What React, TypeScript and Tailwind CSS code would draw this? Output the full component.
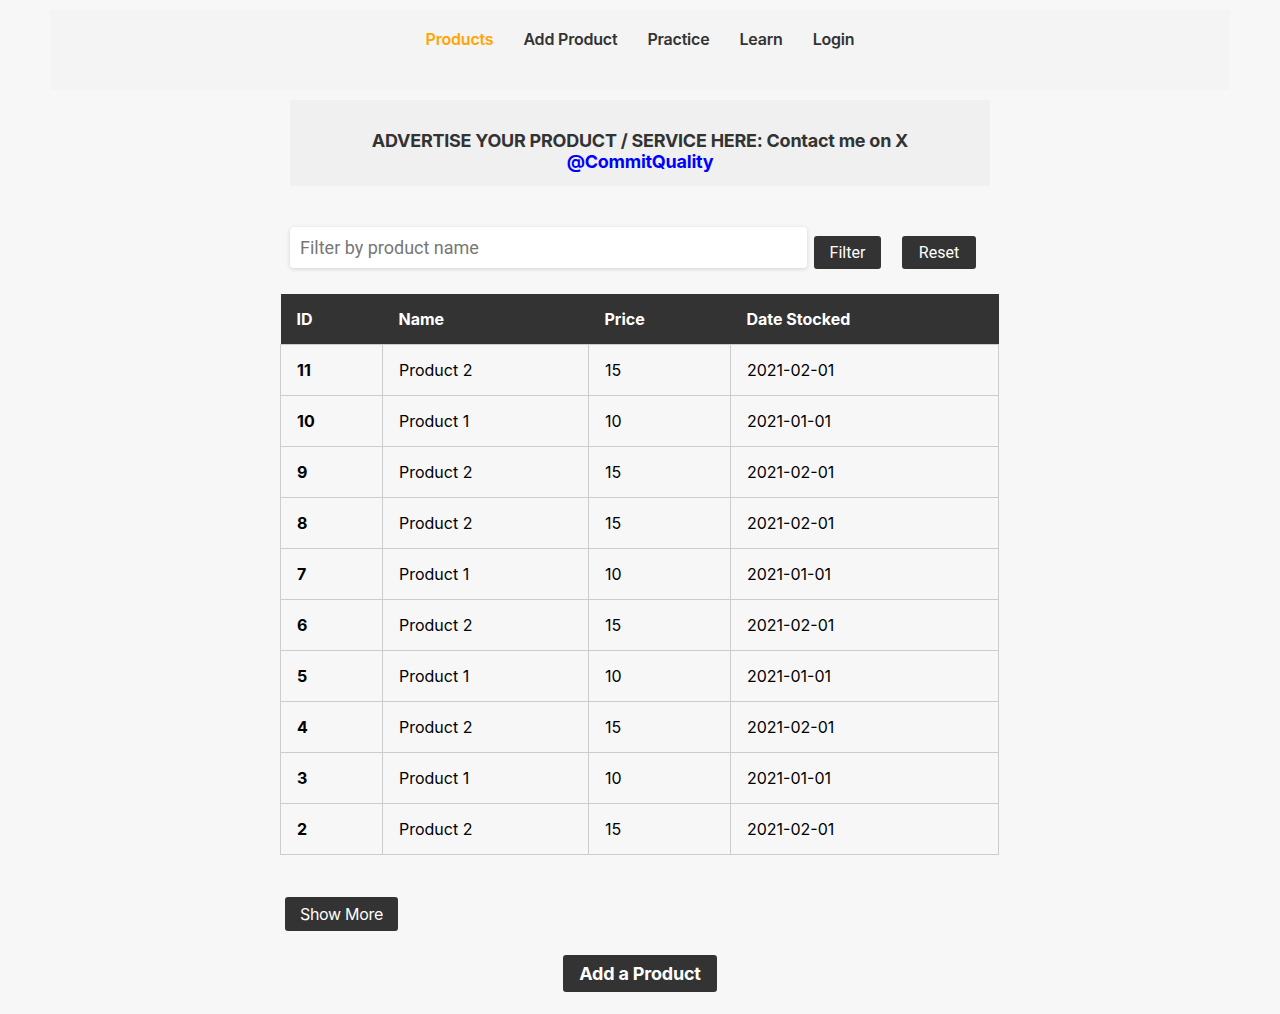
import React from 'react'

const rows = [
  { id: 11, name: 'Product 2', price: 15, date: '2021-02-01' },
  { id: 10, name: 'Product 1', price: 10, date: '2021-01-01' },
  { id: 9, name: 'Product 2', price: 15, date: '2021-02-01' },
  { id: 8, name: 'Product 2', price: 15, date: '2021-02-01' },
  { id: 7, name: 'Product 1', price: 10, date: '2021-01-01' },
  { id: 6, name: 'Product 2', price: 15, date: '2021-02-01' },
  { id: 5, name: 'Product 1', price: 10, date: '2021-01-01' },
  { id: 4, name: 'Product 2', price: 15, date: '2021-02-01' },
  { id: 3, name: 'Product 1', price: 10, date: '2021-01-01' },
  { id: 2, name: 'Product 2', price: 15, date: '2021-02-01' },
]

const links = ['Products', 'Add Product', 'Practice', 'Learn', 'Login']

export default function App() {
  return (
    <div className="min-h-[1014px] bg-[#f7f7f7] pt-[10px] font-['Inter',sans-serif] text-[#333]">
      {/* Nav */}
      <nav className="mx-[50px] h-[80px] bg-[#f4f4f4] flex justify-center pt-[18px]">
        <ul className="flex gap-[30px] text-[16px] font-semibold leading-[22px] tracking-[-0.2px]">
          {links.map((l, i) => (
            <li key={l} className={i === 0 ? 'text-[#ffa500]' : 'text-[#333]'}>{l}</li>
          ))}
        </ul>
      </nav>

      <div className="w-[720px] mx-auto">
        {/* Ad banner */}
        <div className="mt-[10px] ml-[10px] w-[700px] h-[86px] bg-[#f0f0f0] flex flex-col items-center justify-center pt-[16px] text-[18px] font-bold leading-[21px] tracking-[-0.25px]">
          <p>ADVERTISE YOUR PRODUCT / SERVICE HERE: Contact me on X</p>
          <a className="text-[#0000ff]">@CommitQuality</a>
        </div>

        {/* Filter */}
        <div className="mt-[41px] ml-[10px] flex items-start">
          <input
            placeholder="Filter by product name"
            className="w-[517px] h-[41px] bg-white rounded-[4px] shadow-[0_1px_4px_rgba(0,0,0,0.15)] px-[10px] text-[18px] font-['Roboto',sans-serif] placeholder:text-[#777] outline-none"
          />
          <button className="ml-[7px] mt-[9px] h-[33px] w-[67px] bg-[#333] text-white rounded-[3px] text-[16px] font-['Roboto',sans-serif]">Filter</button>
          <button className="ml-[21px] mt-[9px] h-[33px] w-[74px] bg-[#333] text-white rounded-[3px] text-[16px] font-['Roboto',sans-serif]">Reset</button>
        </div>

        {/* Table */}
        <table className="mt-[25px] w-[719px] border-collapse text-[16px]">
          <thead>
            <tr className="bg-[#333] text-white h-[50px]">
              <th className="w-[102px] text-left font-bold pl-[16px]">ID</th>
              <th className="w-[206px] text-left font-bold pl-[16px]">Name</th>
              <th className="w-[142px] text-left font-bold pl-[16px]">Price</th>
              <th className="text-left font-bold pl-[16px]">Date Stocked</th>
            </tr>
          </thead>
          <tbody>
            {rows.map((r) => (
              <tr key={r.id} className="h-[51px]">
                <td className="border border-[#ccc] pl-[16px] font-bold text-black">{r.id}</td>
                <td className="border border-[#ccc] pl-[16px] text-black">{r.name}</td>
                <td className="border border-[#ccc] pl-[16px] text-black">{r.price}</td>
                <td className="border border-[#ccc] pl-[16px] text-black">{r.date}</td>
              </tr>
            ))}
          </tbody>
        </table>

        <button className="mt-[42px] ml-[5px] h-[34px] w-[113px] bg-[#333] text-white rounded-[3px] text-[16px] tracking-[-0.3px]">Show More</button>

        <div className="flex justify-center mt-[24px]">
          <button className="h-[37px] w-[154px] bg-[#333] text-white rounded-[3px] text-[18px] font-bold tracking-[-0.2px]">Add a Product</button>
        </div>
      </div>
    </div>
  )
}
